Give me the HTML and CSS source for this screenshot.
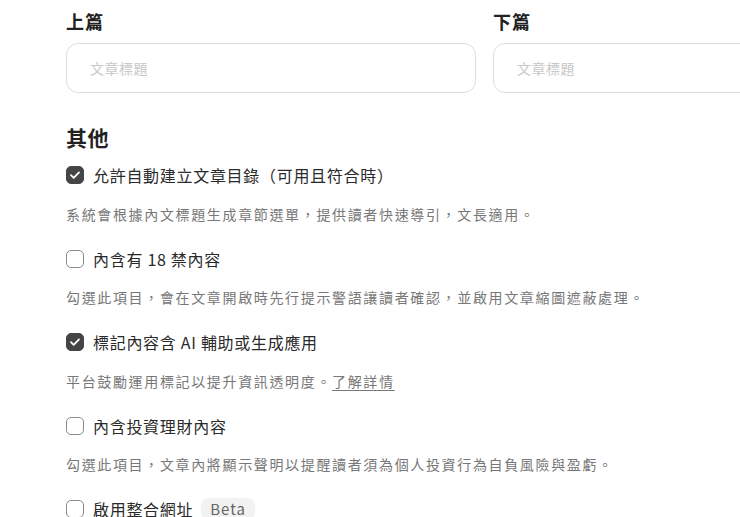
FILE: index.html
```html
<!DOCTYPE html>
<html lang="zh-Hant">
<head>
<meta charset="utf-8">
<link rel="stylesheet" href="styles.css">
</head>
<body>
<div class="page">
  <div class="nav-grid">
    <div class="nav-col">
      <h3 class="field-title">上篇</h3>
      <div class="input-box"><span class="placeholder">文章標題</span></div>
    </div>
    <div class="nav-col">
      <h3 class="field-title">下篇</h3>
      <div class="input-box"><span class="placeholder">文章標題</span></div>
    </div>
  </div>

  <h2 class="section-title">其他</h2>

  <div class="option">
    <div class="option-row">
      <span class="box checked"><svg viewBox="0 0 18 18" width="18" height="18"><path d="M5 9.2l2.7 2.6L13 6.4" fill="none" stroke="#fff" stroke-width="1.8" stroke-linecap="round" stroke-linejoin="round"/></svg></span>
      <span class="label">允許自動建立文章目錄（可用且符合時）</span>
    </div>
    <p class="desc">系統會根據內文標題生成章節選單，提供讀者快速導引，文長適用。</p>
  </div>

  <div class="option">
    <div class="option-row">
      <span class="box"></span>
      <span class="label">內含有 18 禁內容</span>
    </div>
    <p class="desc">勾選此項目，會在文章開啟時先行提示警語讓讀者確認，並啟用文章縮圖遮蔽處理。</p>
  </div>

  <div class="option">
    <div class="option-row">
      <span class="box checked"><svg viewBox="0 0 18 18" width="18" height="18"><path d="M5 9.2l2.7 2.6L13 6.4" fill="none" stroke="#fff" stroke-width="1.8" stroke-linecap="round" stroke-linejoin="round"/></svg></span>
      <span class="label">標記內容含 AI 輔助或生成應用</span>
    </div>
    <p class="desc">平台鼓勵運用標記以提升資訊透明度。<a class="link" href="#">了解詳情</a></p>
  </div>

  <div class="option">
    <div class="option-row">
      <span class="box"></span>
      <span class="label">內含投資理財內容</span>
    </div>
    <p class="desc">勾選此項目，文章內將顯示聲明以提醒讀者須為個人投資行為自負風險與盈虧。</p>
  </div>

  <div class="option">
    <div class="option-row">
      <span class="box"></span>
      <span class="label">啟用整合網址</span>
      <span class="badge">Beta</span>
    </div>
  </div>
</div>
</body>
</html>
```

FILE: styles.css
```css
html, body {
  margin: 0;
  padding: 0;
  background: #fff;
  overflow: hidden;
}
body {
  font-family: "Noto Sans CJK TC", "Noto Sans", sans-serif;
  color: #222;
}
.page {
  width: 836px;
  padding: 8px 0 0 66px;
}
.nav-grid {
  display: grid;
  grid-template-columns: 410px 410px;
  column-gap: 17px;
}
.field-title {
  margin: 0 0 8px;
  font-size: 18px;
  font-weight: 700;
  line-height: 27px;
  letter-spacing: 1px;
  color: #222;
}
.input-box {
  box-sizing: border-box;
  height: 50px;
  border: 1px solid #dcdcdc;
  border-radius: 12px;
  display: flex;
  align-items: center;
  padding-left: 23px;
}
.placeholder {
  font-size: 14px;
  color: #c8c8c8;
  letter-spacing: 0.5px;
}
.section-title {
  margin: 29px 0 10px;
  font-size: 21px;
  font-weight: 700;
  line-height: 30px;
  letter-spacing: 0.5px;
  color: #222;
}
.option {
  margin-bottom: 21px;
}
.option-row {
  display: flex;
  align-items: center;
  height: 26px;
}
.box {
  box-sizing: border-box;
  width: 18px;
  height: 18px;
  border: 1.5px solid #8a8a8a;
  border-radius: 5px;
  margin-right: 9px;
  display: flex;
  align-items: center;
  justify-content: center;
}
.box.checked {
  background: #454545;
  border-color: #454545;
}
.box svg {
  display: block;
  margin: -1.5px;
}
.label {
  font-size: 16px;
  line-height: 26px;
  color: #2a2a2a;
  letter-spacing: 0.7px;
}
.desc {
  margin: 14.5px 0 0;
  font-size: 14px;
  line-height: 22px;
  color: #777;
  letter-spacing: 1.65px;
}
.link {
  color: #777;
  text-decoration: underline;
  text-underline-offset: 3px;
}
.badge {
  margin-left: 8px;
  background: #f2f2f2;
  color: #666;
  font-size: 15px;
  letter-spacing: 1px;
  padding: 0 9px;
  border-radius: 8px;
  line-height: 22px;
}
```
